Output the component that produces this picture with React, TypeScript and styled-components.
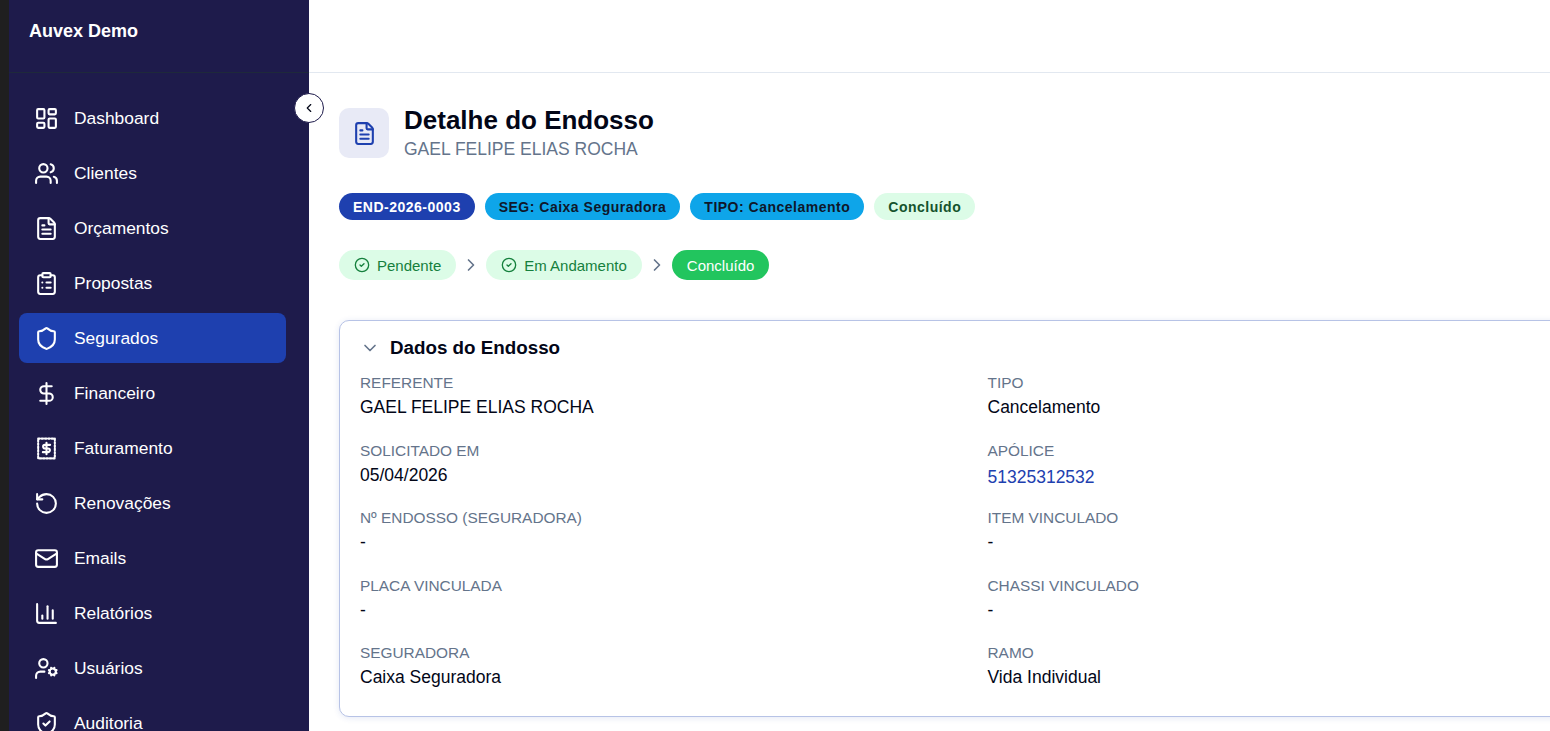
import React from "react";
import styled, { createGlobalStyle } from "styled-components";
import {
  LayoutDashboard, Users, FileText, ClipboardList, Shield, DollarSign, RotateCcw, Mail,
  ChartColumn, UserCog, ShieldCheck, ChevronLeft, ChevronRight, ChevronDown, CircleCheck,
} from "lucide-react";

const Global = createGlobalStyle`
  html, body { margin: 0; padding: 0; height: 100%; overflow: hidden; background: #fff; }
  body { font-family: "Liberation Sans", Arial, sans-serif; color: #020617; }
  * { box-sizing: border-box; }
`;

const Page = styled.div`
  display: flex;
  width: 1550px;
  height: 731px;
  overflow: hidden;
`;
const Strip = styled.div`
  flex: 0 0 9px;
  background: #1f1f1f;
`;
const Sidebar = styled.aside`
  flex: 0 0 300px;
  background: #1e1b4b;
  position: relative;
  overflow: visible;
`;
const Brand = styled.div`
  height: 73px;
  padding: 0 20px 10px;
  display: flex;
  align-items: center;
  border-bottom: 1px solid #1e293b;
  color: #fff;
  font-weight: 700;
  font-size: 18px;
`;
const Nav = styled.nav`
  display: flex;
  flex-direction: column;
  gap: 5px;
  padding: 20px 23px 0 10px;
`;
const NavItem = styled.a<{ $active?: boolean }>`
  height: 50px;
  flex: none;
  display: flex;
  align-items: center;
  gap: 15px;
  padding-left: 15px;
  border-radius: 8px;
  color: #fff;
  font-size: 17.4px;
  background: ${(p) => (p.$active ? "#1e40af" : "transparent")};
`;
const Collapse = styled.button`
  position: absolute;
  top: 93px;
  right: -15px;
  width: 30px;
  height: 30px;
  border-radius: 50%;
  background: #fff;
  border: 1px solid #1e1b4b;
  display: flex;
  align-items: center;
  justify-content: center;
  padding: 0;
  color: #020617;
  z-index: 2;
`;
const Main = styled.main`
  flex: 1 1 auto;
  min-width: 0;
  display: flex;
  flex-direction: column;
`;
const TopBar = styled.header`
  flex: none;
  height: 73px;
  background: #fff;
  border-bottom: 1px solid #e2e8f0;
`;
const Content = styled.div`
  padding: 35px 30px 0;
  width: 1326px;
`;
const Heading = styled.div`
  display: flex;
  gap: 15px;
  align-items: flex-start;
`;
const IconBox = styled.div`
  width: 50px;
  height: 50px;
  border-radius: 10px;
  background: #e8eaf6;
  color: #1e40af;
  display: flex;
  align-items: center;
  justify-content: center;
`;
const Title = styled.h1`
  margin: 0;
  font-size: 26px;
  line-height: 24px;
  font-weight: 700;
`;
const Subtitle = styled.div`
  margin-top: 8px;
  font-size: 17.5px;
  line-height: 18px;
  color: #64748b;
`;
const Chips = styled.div`
  display: flex;
  gap: 10px;
  margin-top: 35px;
`;
const Chip = styled.span<{ $bg: string; $fg: string }>`
  height: 27px;
  padding: 0 14px;
  border-radius: 14px;
  display: flex;
  align-items: center;
  font-size: 14px;
  letter-spacing: 0.5px;
  font-weight: 700;
  background: ${(p) => p.$bg};
  color: ${(p) => p.$fg};
`;
const Steps = styled.div`
  display: flex;
  align-items: center;
  gap: 5px;
  margin-top: 30px;
`;
const Step = styled.span<{ $current?: boolean }>`
  height: 30px;
  padding: 0 15px;
  border-radius: 15px;
  display: flex;
  align-items: center;
  gap: 7px;
  font-size: 15px;
  background: ${(p) => (p.$current ? "#22c55e" : "#dcfce7")};
  color: ${(p) => (p.$current ? "#fff" : "#15803d")};
`;
const StepSep = styled.span`
  display: flex;
  color: #64748b;
`;
const Card = styled.section`
  margin-top: 40px;
  border: 1px solid #b7c3e6;
  border-radius: 10px;
  padding: 15px 20px 0;
  height: 397px;
  box-shadow: 0 1px 6px rgba(30, 64, 175, 0.12);
  background: #fff;
`;
const CardHead = styled.div`
  display: flex;
  align-items: center;
  gap: 10px;
  height: 24px;
  font-size: 18.8px;
  font-weight: 700;
  color: #64748b;
`;
const CardTitle = styled.span`
  color: #020617;
`;
const Fields = styled.div`
  display: grid;
  grid-template-columns: 627.5px 627.5px;
  margin-top: 13px;
`;
const Field = styled.div`
  min-height: 67.6px;
`;
const Label = styled.div`
  font-size: 15.4px;
  line-height: 20px;
  color: #64748b;
  text-transform: uppercase;
`;
const Value = styled.div<{ $link?: boolean }>`
  font-size: 17.5px;
  line-height: 24px;
  margin-top: ${(p) => (p.$link ? "4px" : "2px")};
  color: ${(p) => (p.$link ? "#1e40af" : "#020617")};
`;

const Receipt = (p: { size: number }) => (
  <svg width={p.size} height={p.size} viewBox="0 0 24 24" fill="none" stroke="currentColor" strokeWidth="2" strokeLinecap="round" strokeLinejoin="round">
    <path d="M4 2.5h16v19H4z" strokeDasharray="1.6 1.6" />
    <path d="M15.5 8.5h-5a1.75 1.75 0 0 0 0 3.5h3a1.75 1.75 0 0 1 0 3.5h-5" />
    <path d="M12 6.5v11" />
  </svg>
);

const items: [string, React.ElementType][] = [
  ["Dashboard", LayoutDashboard],
  ["Clientes", Users],
  ["Orçamentos", FileText],
  ["Propostas", ClipboardList],
  ["Segurados", Shield],
  ["Financeiro", DollarSign],
  ["Faturamento", Receipt],
  ["Renovações", RotateCcw],
  ["Emails", Mail],
  ["Relatórios", ChartColumn],
  ["Usuários", UserCog],
  ["Auditoria", ShieldCheck],
];

const fields: [string, string, boolean?][] = [
  ["Referente", "GAEL FELIPE ELIAS ROCHA"],
  ["Tipo", "Cancelamento"],
  ["Solicitado em", "05/04/2026"],
  ["Apólice", "51325312532", true],
  ["Nº Endosso (Seguradora)", "-"],
  ["Item vinculado", "-"],
  ["Placa vinculada", "-"],
  ["Chassi vinculado", "-"],
  ["Seguradora", "Caixa Seguradora"],
  ["Ramo", "Vida Individual"],
];

export default function App() {
  return (
    <Page>
      <Global />
      <Strip />
      <Sidebar>
        <Brand>Auvex Demo</Brand>
        <Nav>
          {items.map(([label, Icon]) => (
            <NavItem key={label} $active={label === "Segurados"}>
              <Icon size={25} />
              {label}
            </NavItem>
          ))}
        </Nav>
        <Collapse>
          <ChevronLeft size={14} />
        </Collapse>
      </Sidebar>
      <Main>
        <TopBar />
        <Content>
          <Heading>
            <IconBox>
              <FileText size={25} />
            </IconBox>
            <div>
              <Title>Detalhe do Endosso</Title>
              <Subtitle>GAEL FELIPE ELIAS ROCHA</Subtitle>
            </div>
          </Heading>
          <Chips>
            <Chip $bg="#1e40af" $fg="#fff">END-2026-0003</Chip>
            <Chip $bg="#0ea5e9" $fg="#0f172a">SEG: Caixa Seguradora</Chip>
            <Chip $bg="#0ea5e9" $fg="#0f172a">TIPO: Cancelamento</Chip>
            <Chip $bg="#dcfce7" $fg="#14532d">Concluído</Chip>
          </Chips>
          <Steps>
            <Step><CircleCheck size={16} />Pendente</Step>
            <StepSep><ChevronRight size={20} /></StepSep>
            <Step><CircleCheck size={16} />Em Andamento</Step>
            <StepSep><ChevronRight size={20} /></StepSep>
            <Step $current>Concluído</Step>
          </Steps>
          <Card>
            <CardHead>
              <ChevronDown size={20} />
              <CardTitle>Dados do Endosso</CardTitle>
            </CardHead>
            <Fields>
              {fields.map(([l, v, link]) => (
                <Field key={l}>
                  <Label>{l}</Label>
                  <Value $link={link}>{v}</Value>
                </Field>
              ))}
            </Fields>
          </Card>
        </Content>
      </Main>
    </Page>
  );
}
